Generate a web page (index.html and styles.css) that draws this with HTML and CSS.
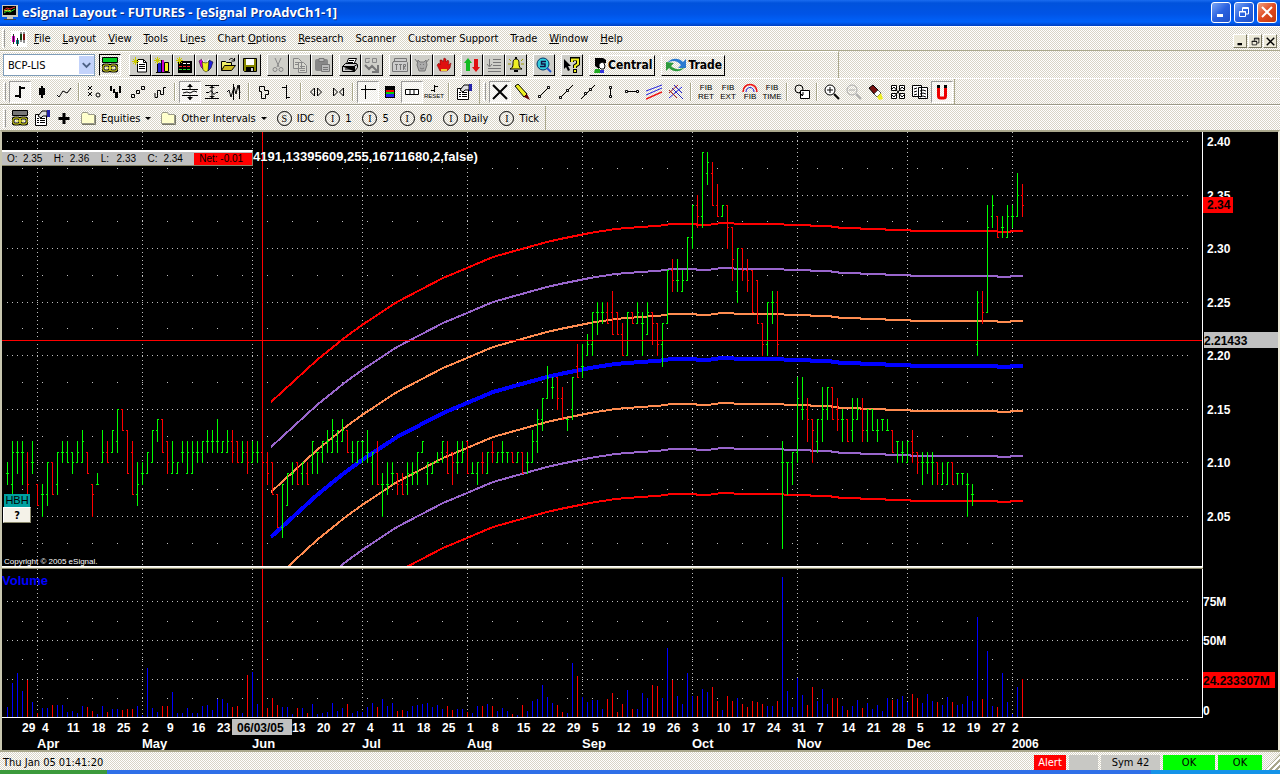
FILE: index.html
```html
<!DOCTYPE html>
<html lang="en">
<head>
    <meta charset="UTF-8">
    <meta name="viewport" content="width=device-width, initial-scale=1.0">
    <title>eSignal Layout - FUTURES - [eSignal ProAdvCh1-1]</title>
    <link rel="stylesheet" href="styles.css">
</head>
<body>
    <!-- icon sprite -->
    <svg class="sprite" aria-hidden="true">
        <symbol id="monitor" viewBox="0 0 16 16"><path fill="#c8c8c0" d="M0 1h16v12H0zM5 13h6v2H5z"/><path fill="#000" d="M1 2h13v9H1z"/><path fill="none" stroke="#e22" d="M2 6l3-2 3 1 5-2"/><path fill="none" stroke="#3d3" d="M2 9l3-2 3 1 5-3"/><path fill="none" stroke="#ee3" d="M2 7l4-1 3 1"/><path fill="#444" d="M2 15h12v1H2z"/></symbol>
        <symbol id="candles" viewBox="0 0 16 16"><path fill="#fff" d="M0 0h16v16H0z"/><path fill="#d0c" d="M1 5h3v6H1z"/><path fill="#088" d="M5 9h3v4H5z"/><path fill="#060" d="M9 3h2v6H9z"/><path fill="#d00" d="M12 3h2v6h-2z"/><path stroke="#222" d="M2.500 3v10M6.500 7v8M10 1v10M13 1v11"/></symbol>
        <symbol id="link" viewBox="0 0 16 16"><path fill="#0c2" stroke="#000" d="M.5 .5h15v5H.5z"/><g fill="none" stroke="#000"><rect x="1" y="8" width="7" height="6" rx="2" stroke-width="3"/><rect x="8" y="8" width="7" height="6" rx="2" stroke-width="3"/></g><g fill="none" stroke="#ee2"><rect x="1" y="8" width="7" height="6" rx="2"/><rect x="8" y="8" width="7" height="6" rx="2"/><path d="M4 11h8"/></g></symbol>
        <symbol id="link-gray" viewBox="0 0 16 16"><path fill="#777" stroke="#000" d="M.5 .5h15v5H.5z"/><g fill="none" stroke="#000"><rect x="1" y="8" width="7" height="6" rx="2" stroke-width="3"/><rect x="8" y="8" width="7" height="6" rx="2" stroke-width="3"/></g><g fill="none" stroke="#ee2"><rect x="1" y="8" width="7" height="6" rx="2"/><rect x="8" y="8" width="7" height="6" rx="2"/><path d="M4 11h8"/></g></symbol>
        <symbol id="new" viewBox="0 0 16 16"><path fill="#fff" stroke="#000" d="M5.500 2.500h6l3 3v9.500h-9z"/><path fill="none" stroke="#000" d="M11.500 2.500v3h3M7 7.500h6M7 9.500h6M7 11.500h6"/><path stroke="#cc0" d="M3.500 0v8M0 4.500h7M1 2l5 5M6 2L1 7"/></symbol>
        <symbol id="newchart" viewBox="0 0 16 16"><path fill="#22c" d="M3 6h4v9H3z"/><path fill="#c0c" d="M7 3h3v12H7z"/><path fill="#ee2" stroke="#000" d="M10.500 5.500h4v9h-4z"/><path stroke="#000" d="M2 15.500h14M3.500 6v9M7.500 3v12"/><path stroke="#cc0" d="M3.500 0v7M0 3.500h7M1 1l5 5M6 1L1 6"/></symbol>
        <symbol id="newquote" viewBox="0 0 16 16"><path d="M2 4h14v12H2z"/><path stroke="#fff" stroke-dasharray="3 1" d="M7 6.500h8"/><path stroke="#e22" stroke-dasharray="3 1" d="M3 9.500h12"/><path stroke="#2d2" stroke-dasharray="3 1" d="M3 12.500h12"/><path stroke="#cc0" d="M3.500 0v7M0 3.500h7M1 1l5 5M6 1L1 6"/></symbol>
        <symbol id="books" viewBox="0 0 16 16"><path fill="#d0d" stroke="#000" stroke-width=".5" d="M1 4l3-2 2 11-3-3z"/><path fill="#ee2" stroke="#000" stroke-width=".5" d="M4 5l4 1 3-2v9l-3 2-3-2z"/><path fill="#22d" stroke="#000" stroke-width=".5" d="M11 3l4 2-2 6-3 3z"/><path fill="none" stroke="#fff" d="M4 2l2 3M11 2l-2 3"/></symbol>
        <symbol id="open" viewBox="0 0 16 16"><path fill="#ee6" stroke="#000" d="M1.500 13.500v-9h4l1 1h5v3"/><path fill="#cb2" stroke="#000" d="M1.500 13.500l3-5h11l-4 5z"/><path fill="none" stroke="#000" d="M9 3c2-2 3-2 5 0M14.500 1v3h-3"/></symbol>
        <symbol id="save" viewBox="0 0 16 16"><path fill="#880" stroke="#000" d="M1.500 1.500h13v13h-12l-1-1z"/><path fill="#fff" d="M4 2h8v6H4z"/><path d="M4 10h8v5H4z"/><path fill="#ccc" d="M9 11h2v3H9z"/></symbol>
        <symbol id="cut" viewBox="0 0 16 16"><g fill="none" stroke="#888"><path d="M5 1l4 9M11 1L7 10"/><circle cx="5" cy="12.500" r="2"/><circle cx="11" cy="12.500" r="2"/></g></symbol>
        <symbol id="copy" viewBox="0 0 16 16"><g fill="#d8d8d0" stroke="#888"><path d="M1.500 1.500h5l3 3v7h-8zM6.500 5.500h5l3 3v7h-8z"/><path d="M3 5.500h4M3 7.500h3M8 9.500h5M8 11.500h5M8 13.500h5"/></g></symbol>
        <symbol id="paste" viewBox="0 0 16 16"><rect x="1" y="2" width="13" height="12" rx="2" fill="#888"/><path fill="#bbb" stroke="#777" d="M5 1.500h5v3H5zM7.500 7.500h8v7h-8z"/><path stroke="#777" d="M9 10.500h5M9 12.500h5"/></symbol>
        <symbol id="print" viewBox="0 0 16 16"><path fill="#fff" stroke="#000" d="M4.500 7l2-5.500h8L12 7"/><path fill="#ccc" stroke="#000" d="M.5 9.500l3-3h11l1 1v3l-3 4H.5z"/><path stroke="#000" d="M.5 9.500h12v5M3 12h7M7 3.500h5M6 5.500h5M12 9.500l3-2"/></symbol>
        <symbol id="go" viewBox="0 0 16 16"><path fill="none" stroke="#888" d="M6 1.500H1.500v4H5v-2M8.500 1.500h4v4h-4z"/><path fill="none" stroke="#777" stroke-width="2" d="M1 8l4 4 3-3 5 5M14 8v7H8"/></symbol>
        <symbol id="itr" viewBox="0 0 16 16"><path fill="#ccc" stroke="#777" d="M2.500 1.500h12v3l1 1v9H.5v-9l2-1z"/><path fill="none" stroke="#777" d="M1 4.500h14M3 7.500h3M4.500 7v6M7 7.500h3M8.500 7v6M11.500 13V7.500h2v2h-2l2 3"/></symbol>
        <symbol id="owl" viewBox="0 0 16 16"><path fill="#aaa" stroke="#777" d="M4 3l2 2h4l2-2 1 5-2 6H5L3 8z"/><path fill="none" stroke="#777" d="M1 2l3 4M15 2l-3 4M6 7.500h1M9 7.500h1M6 11l2 1 2-1"/></symbol>
        <symbol id="hand" viewBox="0 0 16 16"><path fill="#e01010" stroke="#700" stroke-width=".5" d="M4 14L1 8l2-2 1 2V3h2l1 2 1-4 2 1v3l2-2 1 2-1 3 3-2-1 5-3 3z"/><path fill="#ec3" d="M5 12h6v2H5z"/></symbol>
        <symbol id="updown" viewBox="0 0 16 16"><path fill="#1b2" d="M0 6l4-5 4 5H6v8H2V6z"/><path fill="#e01010" d="M8 10h2V2h4v8h2l-4 5z"/></symbol>
        <symbol id="listdown" viewBox="0 0 16 16"><path fill="none" stroke="#777" d="M3.500 2v7M1 7l2.500 3L6 7M7 2.500h8M7 5.500h8M7 8.500h8M2 11.500h13M2 14.500h13"/></symbol>
        <symbol id="bell" viewBox="0 0 16 16"><path fill="#ee2" stroke="#000" d="M8 2c3 0 3 3 3 5 0 3 1 4 3 5H2c2-1 3-2 3-5 0-2 0-5 3-5z"/><path d="M7 0h2v2H7zM6 13h4v2H6z"/><path stroke="#990" d="M1 2l2 2M0 7h3M15 2l-2 2M13 7h3"/></symbol>
        <symbol id="lens" viewBox="0 0 16 16"><circle cx="7" cy="7" r="6" fill="#3cd" stroke="#036"/><path fill="none" stroke="#114" stroke-width="1.500" d="M10 4.500H5.500V7H9v2.500H4"/><path stroke="#25c" stroke-width="2" d="M11 11l4 4"/></symbol>
        <symbol id="help" viewBox="0 0 16 16"><path d="M0 2l7 7H4l2 4-2 1-2-4-2 2z"/><path fill="none" stroke="#000" stroke-width="4" d="M8 5V2h6v5l-3 2v2M11 12v4"/><path fill="none" stroke="#ee2" stroke-width="2" d="M8 5V2.500h6V7l-3 2v2M11 13v2"/></symbol>
        <symbol id="person" viewBox="0 0 16 16"><path d="M3 1h8l3 2v3h-2l-2-1-3 4v3L3 9z"/><path fill="#fff" stroke="#000" d="M7 7l3-2 2 1 1 3-1 3H9l-2-2z"/><path fill="#2a2" d="M3 12h5v4H2z"/><path fill="#33d" d="M8 13h4v3H8z"/></symbol>
        <symbol id="swirl" viewBox="0 0 24 16"><path fill="#2a7ad0" d="M3 6C7 1 14 0 19 5l3-3v9h-8l3-3C13 3 8 3 3 6z"/><path fill="#2c9a3c" d="M21 10c-4 5-11 6-16 1l-3 3V5l8 1-3 3c4 4 9 4 14 1z"/></symbol>

        <symbol id="ohlc" viewBox="0 0 16 16"><path fill="none" stroke="#000" stroke-width="2" d="M8 2v12M8 4h5M3 12h5"/></symbol>
        <symbol id="candle" viewBox="0 0 16 16"><path d="M5 4h6v7H5zM7 2h2v12H7z"/></symbol>
        <symbol id="line" viewBox="0 0 16 16"><path fill="none" stroke="#000" d="M1 11l2 2 4-6 4 2 4-5"/></symbol>
        <symbol id="pnf" viewBox="0 0 16 16"><path fill="none" stroke="#000" d="M2 2l4 4M6 2L2 6M2 8l4 4M6 8l-4 4"/><circle cx="12" cy="11" r="2" fill="none" stroke="#000"/></symbol>
        <symbol id="bars" viewBox="0 0 16 16"><path d="M2 2h2v5H2zM5 5h2v4H5zM7 8h3v6H7zM11 2h2v7h-2z"/></symbol>
        <symbol id="renko" viewBox="0 0 16 16"><path fill="none" stroke="#000" d="M1.500 10.500h3v3h-3zM6.500 6.500h3v3h-3zM11.500 2.500h3v3h-3z"/></symbol>
        <symbol id="kagi" viewBox="0 0 16 16"><path fill="none" stroke="#000" d="M3 9v4.500h2.500v-7h3v4h3V3.500H14"/></symbol>
        <symbol id="fit1" viewBox="0 0 16 16"><path stroke="#000" fill="none" d="M0 5.500h16M0 11.500h16M1 9l4-1 3 1 4-2 3 1M8 0v5M8 16v-5"/><path d="M5 3h6L8 0zM5 13h6l-3 3z"/></symbol>
        <symbol id="fit2" viewBox="0 0 16 16"><path stroke="#000" fill="none" d="M1 1.500h14M1 14.500h14M8 2v12M2 8.500h3l2-2 3 4 2-2h2"/><path d="M5 4h6L8 2zM5 12h6l-3 2z"/></symbol>
        <symbol id="fit3" viewBox="0 0 16 16"><path stroke="#000" fill="none" d="M1 8l2-2 2 7 3-10 2 7 2-9 2 8M7.500 0v16M13.500 1v14"/></symbol>
        <symbol id="blocks" viewBox="0 0 16 16"><path stroke="#000" fill="none" d="M3.500 2.500h5v4h4v4h-3v4h-4v-7h-2z"/></symbol>
        <symbol id="tick" viewBox="0 0 16 16"><path stroke="#000" fill="none" d="M8.500 1v14M4 3.500h4M9 13.500h3"/></symbol>
        <symbol id="expand" viewBox="0 0 16 16"><path stroke="#000" fill="none" d="M6.500 4v8l-4-4zM9.500 4v8l4-4z"/></symbol>
        <symbol id="shrink" viewBox="0 0 16 16"><path stroke="#000" fill="none" d="M3.500 4v8l4-4zM13.500 4v8l-4-4z"/></symbol>
        <symbol id="cross" viewBox="0 0 16 16"><path stroke="#000" fill="none" d="M5.500 1v14M1 5.500h15"/></symbol>
        <symbol id="colors" viewBox="0 0 16 16"><path d="M3 2h10v12H3z"/><path fill="#e00" d="M4 6h8v2H4z"/><path fill="#0c0" d="M4 8h8v2H4z"/><path fill="#22e" d="M4 10h8v3H4z"/></symbol>
        <symbol id="panel" viewBox="0 0 16 16"><path stroke="#000" fill="#fff" d="M1.500 5.500h13v5h-13zM6 6v4M10 6v4"/></symbol>
        <symbol id="reset" viewBox="0 0 16 8"><path stroke="#000" fill="none" d="M8.500 0v7M9 1.500h3M5 5.500h3"/></symbol>
        <symbol id="props" viewBox="0 0 16 16"><path fill="#fff" stroke="#000" d="M1.500 4.500h11v11h-11z"/><path stroke="#000" d="M3 8.500h2M6 8.500h5M3 10.500h2M6 10.500h5M3 12.500h2M6 12.500h5"/><path fill="#ddd" stroke="#000" d="M4 6l4-5h5v5H9L7 8z"/><path fill="#22a" d="M13 0h3v7h-3z"/></symbol>
        <symbol id="bigx" viewBox="0 0 16 16"><path stroke="#000" stroke-width="2" d="M1 1l14 14M15 1L1 15"/></symbol>
        <symbol id="pencil" viewBox="0 0 16 16"><path fill="#ee2" stroke="#000" d="M1 2l3-2 9 10-3 3z"/><path fill="#600" d="M10 13l3-3 3 6z"/></symbol>
        <symbol id="seg" viewBox="0 0 16 16"><path stroke="#000" d="M4 12l8-8"/><path fill="#fff" stroke="#000" d="M2.500 11.500h2v2h-2zM11.500 2.500h2v2h-2z"/></symbol>
        <symbol id="ray" viewBox="0 0 16 16"><path stroke="#000" d="M2 14L15 1"/><path fill="#fff" stroke="#000" d="M1.500 12.500h2v2h-2zM8.500 5.500h2v2h-2z"/></symbol>
        <symbol id="xline" viewBox="0 0 16 16"><path stroke="#000" d="M1 15L15 1"/><path fill="#fff" stroke="#000" d="M4.500 8.500h2v2h-2zM9.500 4.500h2v2h-2z"/></symbol>
        <symbol id="vline" viewBox="0 0 16 16"><path stroke="#000" d="M8.500 3v10"/><path fill="#fff" stroke="#000" d="M7.500 2.500h2v2h-2zM7.500 11.500h2v2h-2z"/></symbol>
        <symbol id="hline" viewBox="0 0 16 16"><path stroke="#000" d="M2 7.500h12"/><path fill="#fff" stroke="#000" d="M1.500 6.500h2v2h-2zM12.500 6.500h2v2h-2z"/></symbol>
        <symbol id="regress" viewBox="0 0 16 16"><path stroke="#22d" d="M0 7l16-6"/><path stroke="#22d" d="M0 11l16-7"/><path stroke="#e11" stroke-width="1.500" d="M0 15l16-7"/></symbol>
        <symbol id="fork" viewBox="0 0 16 16"><path stroke="#22d" d="M6 1l8 8M1 14L14 3"/><path stroke="#a22" d="M1 6l8 8M10 1L1 9"/><path stroke="#22a" d="M4 4l11 11"/></symbol>
        <symbol id="circles" viewBox="0 0 16 16"><circle cx="5" cy="5" r="4" fill="none" stroke="#000"/><path fill="#fff" stroke="#000" d="M6.500 6.500h9v8h-9z"/><path fill="none" stroke="#000" d="M5 8l4 4M6 11h3V8"/></symbol>
        <symbol id="zoomin" viewBox="0 0 16 16"><circle cx="6" cy="6" r="5" fill="#fff" stroke="#000"/><path stroke="#000" d="M3 6h6M6 3v6"/><path stroke="#000" stroke-width="2" d="M10 10l5 5"/></symbol>
        <symbol id="zoomout" viewBox="0 0 16 16"><circle cx="6" cy="6" r="5" fill="none" stroke="#aaa"/><path stroke="#aaa" d="M3 6h6"/><path stroke="#aaa" stroke-width="2" d="M10 10l5 5"/></symbol>
        <symbol id="eraser" viewBox="0 0 16 16"><path fill="#711" stroke="#000" d="M1 4l4-3 5 5-4 4z"/><path fill="#fff" stroke="#555" d="M6 10l4-4 3 3-4 4z"/><path fill="#ee2" d="M9 13l4-4 2 6-4 1z"/></symbol>
        <symbol id="arrange" viewBox="0 0 16 16"><path fill="#fff" stroke="#000" d="M1.500 1.500h5v5h-5zM9.500 1.500h5v5h-5zM1.500 9.500h5v5h-5zM9.500 9.500h5v5h-5z"/><path fill="none" stroke="#000" d="M2 5l2-2 4 5M14 5l-2-2-4 5M2 11l2 2 4-5M14 11l-2 2-4-5"/></symbol>
        <symbol id="pages" viewBox="0 0 16 16"><path fill="#fff" stroke="#000" d="M.5 1.500h9v11h-9zM6.500 3.500h9v11h-9z"/><path fill="none" stroke="#000" d="M2 5l3-1M2 8l3-1M2 11l3-1M8 7l3-1 3 1M8 10l3-1 3 1M8 13l3-1 3 1"/></symbol>
        <symbol id="magnet" viewBox="0 0 16 16"><path fill="none" stroke="#e00" stroke-width="3" d="M4.500 4v8q0 2 2 2h3q2 0 2-2V4"/><path d="M3 1h3v3H3zM10 1h3v3h-3z"/></symbol>
        <symbol id="plus" viewBox="0 0 16 16"><path d="M6.500 3h3v4h4v3h-4v4h-3v-4h-4V7h4z"/></symbol>
        <symbol id="folder" viewBox="0 0 16 16"><path fill="#ffc" stroke="#998" d="M1.500 4.500l1-2h5l1 2h6v9h-13z"/><path fill="none" stroke="#776" d="M15.500 5v9.500H2"/></symbol>
        <symbol id="min" viewBox="0 0 12 12"><path fill="currentColor" d="M2 8h6v3H2z"/></symbol>
        <symbol id="restore" viewBox="0 0 12 12"><path fill="none" stroke="currentColor" d="M1.500 5.500h6v5h-6zM1 6h7M4.500 5V1.500h6V8H8M4 2.500h7"/></symbol>
        <symbol id="close" viewBox="0 0 12 12"><path stroke="currentColor" stroke-width="2" d="M1 1l10 10M11 1L1 11"/></symbol>
    </svg>

    <header class="titlebar">
        <svg class="icon"><use href="#monitor"/></svg>
        <h1>eSignal Layout - FUTURES - [eSignal ProAdvCh1-1]</h1>
        <button class="win-btn" aria-label="Minimize"><svg><use href="#min"/></svg></button>
        <button class="win-btn" aria-label="Restore"><svg><use href="#restore"/></svg></button>
        <button class="win-btn win-close" aria-label="Close"><svg><use href="#close"/></svg></button>
    </header>

    <nav class="menubar">
        <span class="grip"></span>
        <svg class="icon"><use href="#candles"/></svg>
        <button><u>F</u>ile</button>
        <button><u>L</u>ayout</button>
        <button><u>V</u>iew</button>
        <button><u>T</u>ools</button>
        <button>Li<u>n</u>es</button>
        <button>Chart <u>O</u>ptions</button>
        <button><u>R</u>esearch</button>
        <button>Scanner</button>
        <button>Customer Support</button>
        <button>Trade</button>
        <button><u>W</u>indow</button>
        <button><u>H</u>elp</button>
        <div class="mdi">
            <button aria-label="Minimize chart"><svg><use href="#min"/></svg></button>
            <button aria-label="Restore chart"><svg><use href="#restore"/></svg></button>
            <button aria-label="Close chart"><svg><use href="#close"/></svg></button>
        </div>
    </nav>

    <div class="toolbar main-tools">
        <div class="combo">
            <select aria-label="Symbol"><option>BCP-LIS</option></select>
            <svg viewBox="0 0 16 18"><path fill="none" stroke="#4d6185" stroke-width="2" d="M4 7l4 4 4-4"/></svg>
        </div>
        <button class="tool sunken" aria-label="Link"><svg><use href="#link"/></svg></button>
        <div class="group">
            <button class="raised" aria-label="New"><svg><use href="#new"/></svg></button>
            <button class="raised" aria-label="New chart"><svg><use href="#newchart"/></svg></button>
            <button class="raised" aria-label="New quote"><svg><use href="#newquote"/></svg></button>
            <button class="raised" aria-label="Layouts"><svg><use href="#books"/></svg></button>
            <button class="raised" aria-label="Open"><svg><use href="#open"/></svg></button>
            <button class="raised" aria-label="Save"><svg><use href="#save"/></svg></button>
        </div>
        <div class="group">
            <button class="raised" aria-label="Cut"><svg><use href="#cut"/></svg></button>
            <button class="raised" aria-label="Copy"><svg><use href="#copy"/></svg></button>
            <button class="raised" aria-label="Paste"><svg><use href="#paste"/></svg></button>
        </div>
        <div class="group">
            <button class="raised" aria-label="Print"><svg><use href="#print"/></svg></button>
            <button class="raised" aria-label="Go"><svg><use href="#go"/></svg></button>
        </div>
        <div class="group">
            <button class="raised" aria-label="Interval"><svg><use href="#itr"/></svg></button>
            <button class="raised" aria-label="Watch"><svg><use href="#owl"/></svg></button>
            <button class="raised" aria-label="Hot list"><svg><use href="#hand"/></svg></button>
        </div>
        <div class="group">
            <button class="raised" aria-label="Up and down"><svg><use href="#updown"/></svg></button>
            <button class="raised" aria-label="Insert"><svg><use href="#listdown"/></svg></button>
            <button class="raised" aria-label="Alert"><svg><use href="#bell"/></svg></button>
        </div>
        <div class="group"><button class="raised" aria-label="Symbol search"><svg><use href="#lens"/></svg></button></div>
        <div class="group"><button class="raised" aria-label="Help"><svg><use href="#help"/></svg></button></div>
        <button class="wide"><svg><use href="#person"/></svg>Central</button>
        <button class="wide"><svg class="swirl"><use href="#swirl"/></svg>Trade</button>
    </div>

    <div class="toolbar-row">
        <div class="toolbar chart-tools">
            <span class="grip"></span>
            <button class="tool pressed" aria-label="Bar"><svg><use href="#ohlc"/></svg></button>
            <button class="tool" aria-label="Candlestick"><svg><use href="#candle"/></svg></button>
            <button class="tool" aria-label="Line"><svg><use href="#line"/></svg></button>
            <span class="sep"></span>
            <button class="tool" aria-label="Point and figure"><svg><use href="#pnf"/></svg></button>
            <button class="tool" aria-label="Three line break"><svg><use href="#bars"/></svg></button>
            <button class="tool" aria-label="Renko"><svg><use href="#renko"/></svg></button>
            <button class="tool" aria-label="Kagi"><svg><use href="#kagi"/></svg></button>
            <span class="sep"></span>
            <button class="tool pressed" aria-label="Auto scale"><svg><use href="#fit1"/></svg></button>
            <button class="tool" aria-label="Full scale"><svg><use href="#fit2"/></svg></button>
            <button class="tool" aria-label="Study scale"><svg><use href="#fit3"/></svg></button>
            <span class="sep"></span>
            <button class="tool" aria-label="Blocks"><svg><use href="#blocks"/></svg></button>
            <button class="tool" aria-label="Tick"><svg><use href="#tick"/></svg></button>
            <span class="sep"></span>
            <button class="tool" aria-label="Expand"><svg><use href="#expand"/></svg></button>
            <button class="tool" aria-label="Shrink"><svg><use href="#shrink"/></svg></button>
            <span class="sep"></span>
            <button class="tool pressed" aria-label="Crosshair"><svg><use href="#cross"/></svg></button>
            <button class="tool" aria-label="Colors"><svg><use href="#colors"/></svg></button>
            <button class="tool pressed" aria-label="Cursor window"><svg><use href="#panel"/></svg></button>
            <button class="tool reset"><svg><use href="#reset"/></svg>RESET</button>
            <span class="sep"></span>
            <button class="tool" aria-label="Properties"><svg><use href="#props"/></svg></button>
        </div>
        <div class="toolbar">
            <span class="grip"></span>
            <button class="tool pressed" aria-label="No tool"><svg><use href="#bigx"/></svg></button>
            <button class="tool" aria-label="Draw"><svg><use href="#pencil"/></svg></button>
            <button class="tool" aria-label="Segment"><svg><use href="#seg"/></svg></button>
            <button class="tool" aria-label="Ray"><svg><use href="#ray"/></svg></button>
            <button class="tool" aria-label="Extended line"><svg><use href="#xline"/></svg></button>
            <button class="tool" aria-label="Vertical line"><svg><use href="#vline"/></svg></button>
            <button class="tool" aria-label="Horizontal line"><svg><use href="#hline"/></svg></button>
            <button class="tool" aria-label="Regression"><svg><use href="#regress"/></svg></button>
            <button class="tool" aria-label="Pitchfork"><svg><use href="#fork"/></svg></button>
            <span class="sep"></span>
            <button class="tool fib">FIB<br>RET</button>
            <button class="tool fib">FIB<br>EXT</button>
            <button class="tool fib arc"><svg viewBox="0 0 16 9"><path fill="none" stroke="#e11" stroke-width="1.500" d="M1 9c0-10 14-10 14 0"/><path fill="none" stroke="#22d" d="M4 9c0-6 8-6 8 0"/></svg>FIB</button>
            <button class="tool fib">FIB<br>TIME</button>
            <span class="sep"></span>
            <button class="tool" aria-label="Shapes"><svg><use href="#circles"/></svg></button>
            <span class="sep"></span>
            <button class="tool" aria-label="Zoom in"><svg><use href="#zoomin"/></svg></button>
            <button class="tool" aria-label="Zoom out"><svg><use href="#zoomout"/></svg></button>
            <button class="tool" aria-label="Erase"><svg><use href="#eraser"/></svg></button>
            <button class="tool" aria-label="Arrange"><svg><use href="#arrange"/></svg></button>
            <button class="tool" aria-label="Pages"><svg><use href="#pages"/></svg></button>
            <button class="tool pressed" aria-label="Magnet"><svg><use href="#magnet"/></svg></button>
        </div>
    </div>

    <div class="toolbar-row">
        <div class="toolbar intervals">
            <span class="grip"></span>
            <button class="tool" aria-label="Link group"><svg><use href="#link-gray"/></svg></button>
            <button class="tool" aria-label="Edit studies"><svg><use href="#props"/></svg></button>
            <button class="tool" aria-label="Add"><svg><use href="#plus"/></svg></button>
            <button class="folder"><svg><use href="#folder"/></svg>Equities<i class="caret"></i></button>
            <button class="folder"><svg><use href="#folder"/></svg>Other Intervals<i class="caret"></i></button>
            <button class="interval"><b>S</b>IDC</button>
            <button class="interval"><b>I</b>1</button>
            <button class="interval"><b>I</b>5</button>
            <button class="interval"><b>I</b>60</button>
            <button class="interval"><b>I</b>Daily</button>
            <button class="interval"><b>I</b>Tick</button>
        </div>
    </div>

    <main class="chart">
        <div class="pane">
            <svg id="price" class="plot price"></svg>
            <svg id="price-axis" class="axis"></svg>
            <div class="cursor-window">
                <span>O:</span><span>2.35</span>
                <span>H:</span><span>2.36</span>
                <span>L:</span><span>2.33</span>
                <span>C:</span><span>2.34</span>
                <span class="net">Net: -0.01</span>
            </div>
            <div class="legend">
                <span class="hbh">HBH</span>
                <button>?</button>
            </div>
        </div>
        <div class="splitter"></div>
        <div class="pane">
            <svg id="volume" class="plot volume"></svg>
            <svg id="volume-axis" class="axis"></svg>
        </div>
        <svg id="dates" class="dates"></svg>
    </main>

    <footer class="statusbar">
        <span class="clock">Thu Jan 05 01:41:20</span>
        <span class="cell alert">Alert</span>
        <span class="cell blank"></span>
        <span class="cell symbols">Sym 42</span>
        <span class="cell ok">OK</span>
        <span class="cell ok last">OK</span>
        <span class="resize"></span>
    </footer>
    <div class="taskbar"><span class="start"></span><span class="tray"></span></div>

    <script src="chart.js"></script>
</body>
</html>
```
FILE: styles.css
```css
* {
    box-sizing: border-box;
}
body {
    margin: 0;
    min-height: 100vh;
    display: flex;
    flex-direction: column;
    font-family: "DejaVu Sans Condensed", "DejaVu Sans", Tahoma, sans-serif;
    font-size: 11px;
    color: #000;
    background: repeating-conic-gradient(#ffffff 0 25%, #d8d4c6 0 50%) 0 0 / 2px 2px;
}
button {
    font: inherit;
    color: inherit;
    background: none;
    border: none;
    padding: 0;
    white-space: nowrap;
}
svg {
    display: block;
    flex: none;
}
.sprite {
    position: absolute;
    width: 0;
    height: 0;
}
.icon {
    width: 16px;
    height: 16px;
}

/* title bar */
.titlebar {
    height: 26px;
    display: flex;
    align-items: center;
    gap: 3px;
    padding: 0 3px 2px 2px;
    background: linear-gradient(#1a6cf0 0, #0052dc 3px, #0054e6 14px, #0062fa 22px, #0040c0 26px);
}
.titlebar h1 {
    flex: 1;
    margin: 0 0 0 1px;
    font: bold 13px/20px "Open Sans", "Noto Sans", sans-serif;
    color: #fff;
    text-shadow: 1px 1px #0a2a80;
}
.win-btn {
    width: 20px;
    height: 21px;
    display: grid;
    place-items: center;
    color: #fff;
    border: 1px solid #fff;
    border-radius: 3px;
    background: linear-gradient(135deg, #7ba6f5, #2a62e0 50%, #1f50c8);
}
.win-btn svg {
    width: 12px;
    height: 12px;
}
.win-close {
    background: linear-gradient(135deg, #f0a080, #e04a20 50%, #c03a10);
}

/* menu */
.menubar {
    height: 25px;
    display: flex;
    align-items: center;
    padding: 0 3px 0 2px;
    border-top: 1px solid #fff;
    border-bottom: 1px solid #aaa88c;
}
.menubar > button {
    padding: 0 6px;
}
.menubar .icon {
    margin: 0 1px 0 3px;
}
.mdi {
    display: flex;
    gap: 1px;
    margin-left: auto;
    padding-top: 5px;
}
.mdi button {
    width: 14px;
    height: 14px;
    display: grid;
    place-items: center;
    background: #ece9d8;
    border: 1px solid #fff;
    border-right-color: #77755f;
    border-bottom-color: #77755f;
}
.mdi svg {
    width: 9px;
    height: 9px;
}

/* toolbars */
.grip {
    width: 3px;
    height: 19px;
    border: 1px solid #fff;
    border-right-color: #999;
    margin-right: 3px;
}
.toolbar-row {
    display: flex;
    height: 27px;
    border-top: 1px solid #fff;
    border-bottom: 1px solid #9c9a88;
}
.toolbar {
    display: flex;
    align-items: center;
    padding: 0 1px 0 3px;
    border-right: 1px solid #aaa88c;
}
.chart-tools {
    padding-right: 4px;
}
.main-tools {
    height: 27px;
    width: 839px;
    max-width: 100%;
    gap: 6px;
    border-top: 1px solid #fff;
}
.group {
    display: flex;
}
.combo {
    position: relative;
    width: 92px;
    margin-right: -2px;
}
.combo select {
    appearance: none;
    width: 100%;
    height: 22px;
    padding: 0 4px;
    font: inherit;
    color: #000;
    background: #fff;
    border: 1px solid #7f9db9;
    border-radius: 0;
}
.combo svg {
    position: absolute;
    right: 1px;
    top: 2px;
    width: 15px;
    height: 18px;
    background: #c3d3fb;
    pointer-events: none;
}
.tool {
    width: 22px;
    height: 22px;
    display: grid;
    place-items: center;
    border: 1px solid transparent;
}
.tool svg,
.raised svg,
.wide svg {
    width: 16px;
    height: 16px;
}
.pressed {
    border-color: #999 #fff #fff #999;
    background: rgba(255, 255, 255, 0.5);
}
.sunken {
    border-color: #000 #fff #fff #000;
    margin-right: 2px;
}
.raised {
    width: 22px;
    height: 22px;
    display: grid;
    place-items: center;
    background: #cfcfc9;
    border: 1px solid #fff;
    border-right-color: #000;
    border-bottom-color: #000;
}
.wide {
    height: 21px;
    display: flex;
    align-items: center;
    padding: 0 2px;
    font-size: 12px;
    font-weight: bold;
    border: 1px solid #fff;
    border-right-color: #000;
    border-bottom-color: #000;
}
.wide .swirl {
    width: 24px;
}
.sep {
    width: 2px;
    height: 18px;
    margin: 0 3px;
    border-left: 1px solid #aaa88c;
    border-right: 1px solid #fff;
}
.fib {
    align-content: center;
    font: 8px/9px "Liberation Sans", Arial, sans-serif;
}
.tool.arc svg {
    height: 9px;
}
.reset {
    align-content: center;
    font: 6px/6px "Liberation Sans", Arial, sans-serif;
}
.tool.reset svg {
    height: 8px;
}
.toolbar-row + .toolbar-row {
    height: 25px;
    border-bottom: none;
}
.folder,
.interval {
    display: flex;
    align-items: center;
    gap: 5px;
}
.folder {
    padding: 0 4px 0 5px;
}
.folder svg {
    width: 16px;
    height: 16px;
}
.caret {
    border: 3px solid transparent;
    border-top-color: #000;
    border-bottom: none;
}
.interval {
    padding: 0 5px 0 6px;
}
.interval b {
    width: 15px;
    height: 15px;
    border: 1px solid #000;
    border-radius: 50%;
    font: 10px/13px "Liberation Serif", serif;
    text-align: center;
}

/* chart */
.chart {
    flex: 1;
    border: 2px solid #aaa88c;
    border-left-color: #c9c7b0;
    border-right-color: #ece9d8;
    border-bottom: none;
    background: #000;
}
.pane {
    position: relative;
    display: flex;
}
.plot {
    flex: 1;
    min-width: 0;
    border-right: 1px solid #fff;
}
.price,
.price + .axis {
    height: 434px;
}
.volume,
.volume + .axis {
    height: 149px;
}
.axis {
    width: 75px;
}
.splitter {
    height: 3px;
    margin-right: 75px;
    background: #ece9d8;
    border-top: 1px solid #fff;
    border-bottom: 1px solid #8a886c;
}
.dates {
    width: 100%;
    height: 32px;
}
.chart text {
    font: bold 12px "Liberation Sans", Arial, sans-serif;
    fill: #fff;
}
.chart .title,
.chart .month {
    font-size: 13px;
}
.chart .volume-title {
    fill: #00f;
}
.chart .copyright {
    font-weight: normal;
    font-size: 8px;
}
.chart .dark {
    fill: #000;
}
.grid {
    stroke: #c0c0c0;
    fill: none;
}
.up {
    stroke: #0f0;
    fill: none;
}
.down {
    stroke: #f00;
    fill: none;
}
.vol-up {
    stroke: #00f;
}
.cursor-window {
    position: absolute;
    left: 0;
    top: 18px;
    width: 251px;
    height: 16px;
    display: flex;
    align-items: center;
    padding-left: 5px;
    font: 10px/12px "Liberation Sans", Arial, sans-serif;
    background: #c0c0c0;
    border-top: 2px solid #fff;
    border-right: 1px solid #8a886c;
    border-bottom: 1px solid #8a886c;
}
.cursor-window span:nth-child(odd) {
    width: 16px;
}
.cursor-window span:nth-child(even) {
    width: 31px;
}
.cursor-window span.net {
    width: 58px;
    padding-left: 5px;
    margin-left: auto;
    background: #f00;
}
.legend {
    position: absolute;
    left: 1px;
    top: 362px;
    width: 28px;
    text-align: center;
}
.hbh {
    display: block;
    margin: 0 1px;
    font: 11px/13px "Liberation Sans", Arial, sans-serif;
    background: #00a0a0;
}
.legend button {
    display: block;
    width: 28px;
    height: 16px;
    font-weight: bold;
    background: #f4f2e8;
    border: 1px solid #fff;
    border-right-color: #8a886c;
    border-bottom-color: #8a886c;
}

/* status bar */
.statusbar {
    height: 20px;
    display: flex;
    align-items: center;
    gap: 3px;
    padding: 2px 0 0 3px;
    border-top: 2px solid #aaa88c;
}
.clock {
    flex: 1;
}
.cell {
    height: 15px;
    line-height: 15px;
    text-align: center;
    background: #c8c8c4;
}
.alert {
    width: 32px;
    color: #fff;
    background: #f00;
}
.blank {
    width: 29px;
}
.symbols {
    width: 59px;
}
.ok {
    width: 52px;
    background: #0f0;
}
.last {
    width: 44px;
}
.resize {
    width: 15px;
    height: 16px;
    background: repeating-linear-gradient(135deg, #fff 0 2px, #aaa88c 2px 4px);
    clip-path: polygon(100% 0, 100% 100%, 0 100%);
}
.taskbar {
    height: 4px;
    display: flex;
    justify-content: space-between;
    background: #2f6fe8;
}
.start {
    width: 107px;
    background: #3c9a3c;
}
.tray {
    width: 129px;
    background: #1593e8;
}
```
FILE: chart.js
```javascript
// direction, open, high, low, close (cents above 2.00), volume bar height
const bars = `
G 9 10 8 9 10|G 8 12 7 11 34|G 11 12 9 11 44|G 11 12 8 11 26|R 10 11 7 8 37|G 10 12 9 10 15|R 8 8 6 6 4|G 7 8 5 7 9
G 7 10 6 10 9|R 10 10 7 7 12|G 8 11 7 11 12|G 11 12 10 11 12|G 11 12 10 10 5|G 11 11 9 10 6|G 10 12 10 11 4|G 10 13 10 12 11
R 11 11 9 9 10|R 8 8 5 7 6|G 8 9 8 8 3|G 10 13 10 11 11|R 11 12 10 10 5|G 11 13 11 13 8|G 12 15 11 15 8|R 15 15 13 13 7
R 13 13 9 9 8|R 11 12 7 7 8|G 7 10 6 8 11|G 9 10 8 9 2|G 9 11 9 11 49|G 10 13 10 13 9|G 13 14 12 14 5|R 14 14 11 11 11
R 12 12 9 10 11|G 9 12 9 10 25|G 9 10 9 10 4|G 11 12 10 11 4|G 9 12 9 11 9|G 9 12 9 11 4|G 11 12 10 11 4|G 11 12 10 12 11
G 12 13 11 12 12|G 12 13 11 12 7|G 12 14 11 12 18|G 11 12 11 12 18|G 11 13 11 12 14|R 12 13 10 11 10|R 12 12 10 10 11|G 10 12 10 11 4
R 11 12 9 10 42|G 10 12 10 11 45|G 11 12 10 11 13|R 11 12 10 10 6|R 10 11 8 9 9|R 10 10 7 7 19|R 7 7 4 4 12|G 4 8 3 8 10
G 6 9 6 9 10|G 9 10 8 9 3|R 10 10 8 8 9|G 9 10 8 10 9|R 9 10 8 8 4|G 10 12 9 12 13|G 11 11 9 11 3|G 11 12 10 12 4
G 12 13 11 12 5|G 11 14 11 13 14|G 12 13 11 13 6|G 12 14 12 13 9|R 13 13 11 11 13|G 11 12 10 11 4|G 10 12 10 12 6|G 12 12 10 12 5
G 11 13 10 11 10|G 10 11 8 11 14|R 11 12 8 8 10|G 8 9 5 8 18|G 8 10 7 8 11|G 9 10 8 9 14|R 9 9 7 8 6|R 8 9 7 7 7
G 8 10 7 9 6|G 9 10 8 9 11|G 9 11 8 11 12|G 11 12 11 12 13|G 9 10 8 10 14|G 9 10 9 10 10|G 10 11 10 10 12|G 11 12 10 12 8
R 11 12 9 9 11|R 11 11 8 10 7|G 10 12 9 10 8|G 10 12 10 11 8|R 12 12 9 9 5|G 9 10 9 9 4|G 9 10 8 10 11|R 10 11 9 10 11
G 9 11 9 11 13|R 11 12 10 11 11|G 10 11 10 11 6|G 11 12 10 11 9|G 11 11 10 11 6|R 11 11 10 10 3|G 10 11 10 11 2|R 11 11 9 9 12
G 10 11 9 10 6|G 10 13 10 12 16|G 12 15 11 14 18|G 14 16 13 16 32|G 16 19 16 18 20|G 17 18 16 17 14|R 18 18 15 16 12|R 16 17 14 14 5
G 14 14 13 14 4|G 15 18 14 18 54|R 19 21 18 18 41|G 19 21 18 19 20|G 20 22 20 21 15|G 21 24 20 24 17|G 24 25 22 24 17|G 24 25 23 24 8
R 24 25 23 23 18|R 24 26 22 22 24|R 24 24 22 22 5|R 22 23 20 20 13|G 20 24 20 24 27|R 24 24 23 23 8|G 23 25 23 24 8|G 23 24 20 23 24
G 22 25 22 24 19|R 24 24 21 23 32|R 23 23 20 21 31|G 21 23 19 23 19|G 23 28 23 28 69|R 28 29 26 27 37|G 27 29 26 27 21|G 26 28 26 27 13
G 27 31 27 31 44|G 31 34 30 34 21|R 34 35 32 33 21|G 33 39 32 39 28|G 37 39 36 38 25|R 37 38 34 34 30|R 34 36 33 33 16|G 33 34 33 34 7
R 34 34 30 32 21|R 32 32 27 29 16|G 26 30 25 30 19|R 30 30 27 28 13|R 28 29 26 27 10|R 28 28 24 24 16|R 27 27 23 23 15|R 23 23 20 21 13
G 21 25 20 25 11|G 25 26 23 25 11|R 25 26 20 21 16|G 10 12 2 10 140|G 10 10 7 10 26|G 10 11 8 11 10|G 11 18 10 16 39|G 15 18 14 15 22
R 15 16 12 14 12|R 14 14 10 13 30|G 12 14 11 14 16|G 14 17 12 15 28|G 15 17 14 17 13|R 17 17 14 14 19|R 15 16 13 14 19|G 14 15 12 14 11
R 14 14 12 12 7|G 13 16 12 14 11|G 14 16 14 15 17|R 15 16 12 13 9|G 13 15 12 15 14|G 15 15 13 13 8|G 13 14 12 13 12|G 14 14 13 14 6
G 13 14 13 13 19|R 13 13 11 11 17|G 12 12 10 12 18|G 11 12 10 11 21|G 10 12 10 12 15|R 12 13 10 11 23|R 11 11 9 10 19|G 10 11 8 10 14
G 10 11 9 10 23|G 10 11 8 10 16|R 10 10 8 9 15|G 8 10 8 9 12|G 8 10 8 10 20|R 10 10 8 8 15|G 9 9 8 9 12|G 9 9 8 9 13
G 8 9 5 8 21|G 7 8 6 7 16|G 21 26 20 25 100|R 25 26 23 24 18|G 24 34 24 32 66|G 33 35 32 34 11|R 33 33 31 31 10|G 32 33 31 32 44
G 31 34 31 33 15|G 33 34 32 33 3|G 33 37 33 35 30|R 35 36 33 34 38`
    .trim().split(/[|\n]/).map(row => row.split(' '));

// centre of the hurst bands, the other lines run parallel to it
const center = [[269, 405], [315, 363], [341, 342], [360, 328], [395, 305], [441, 281], [465, 271], [491, 260],
    [516, 253], [545, 245], [558, 242], [588, 236], [613, 232], [638, 230], [655, 229], [670, 227], [693, 227],
    [696, 228], [705, 228], [720, 226], [731, 226], [733, 227], [781, 227], [783, 228], [808, 228], [809, 229],
    [829, 229], [830, 230], [836, 230], [837, 231], [858, 231], [859, 232], [883, 232], [884, 233], [908, 233],
    [909, 234], [995, 234], [996, 235], [1008, 235], [1009, 234], [1021, 234]];
const bands = [[-135, '#ff0000', 2], [-90, '#9966cc', 2], [-45, '#ff8c50', 2], [0, '#0000ff', 4],
    [45, '#ff8c50', 2], [90, '#9966cc', 2], [135, '#ff0000', 2]];

const days = [29, 4, 11, 18, 25, 2, 9, 16, 23, '', '', 13, 20, 27, 4, 11, 18, 25, 1, 8, 15, 22, 29, 5, 12, 19, 26,
    3, 10, 17, 24, 31, 7, 14, 21, 28, 5, 12, 19, 27];
const months = { Apr: 35, May: 140, Jun: 250, Jul: 360, Aug: 465, Sep: 580, Oct: 690, Nov: 795, Dec: 905, 2006: 1010 };
const dayX = i => i === 0 ? 20 : 15 + i * 25;
const cursorX = 260;

const priceY = p => Math.round(9 + (40 - p) * 10.71) + 0.5;
const barX = i => 5.5 + i * 5;

function path(cls, d, extra = '') {
    return `<path class="${cls}" shape-rendering="crispEdges" d="${d}" ${extra}/>`;
}

function text(x, y, s, cls = '') {
    return `<text x="${x}" y="${y}" class="${cls}">${s}</text>`;
}

function grid(width, height, major, minor) {
    let out = '';
    for (const y of major) out += path('grid', `M5 ${y}H${width - 10}`, 'stroke-dasharray="1 4"');
    for (const x of Object.values(months)) out += path('grid', `M${x + 0.5} 0V${height}`, 'stroke-dasharray="1 3"');
    let dots = '';
    for (const y of minor) {
        days.forEach((d, i) => dots += `M${dayX(i)} ${y}h1`);
    }
    return out + path('grid', dots);
}

function drawPrice() {
    const svg = document.getElementById('price');
    const width = svg.clientWidth;
    const major = [40, 35, 30, 25, 20, 15, 10, 5];
    let out = grid(width, 434, major.map(priceY), major.map(p => priceY(p - 2.5)));

    for (const [offset, color, size] of bands) {
        const d = 'M' + center.map(([x, y]) => `${x} ${y + offset}`).join('L');
        out += path('', d, `fill="none" stroke="${color}" stroke-width="${size}"`);
    }
    bars.forEach(([dir, o, h, l, c], i) => {
        const x = barX(i);
        out += path(dir === 'G' ? 'up' : 'down',
            `M${x} ${priceY(h) - 0.5}V${priceY(l) + 0.5}M${x - 1.5} ${priceY(o)}h1M${x + 0.5} ${priceY(c)}h1`);
    });
    out += path('down', `M0 208.5H${width}M${cursorX + 0.5} 0V434`);
    out += text(251, 29, '4191,13395609,255,16711680,2,false)', 'title');
    out += text(2, 432, 'Copyright © 2005 eSignal.', 'copyright');
    svg.innerHTML = out;

    out = major.map(p => text(4, priceY(p) + 4, '2.' + String(p).padStart(2, '0'))).join('');
    out += '<rect x="0" y="65" width="30" height="16" fill="#f00"/>' + text(4, 77, '2.34', 'dark');
    out += '<rect x="1" y="200" width="74" height="16" fill="#c0c0c0"/>' + text(1, 213, '2.21433', 'dark');
    document.getElementById('price-axis').innerHTML = out;
}

function drawVolume() {
    const svg = document.getElementById('volume');
    let out = grid(svg.clientWidth, 149, [32.5, 71.5, 110.5], [52.5, 90.5, 129.5]);
    bars.forEach(([dir, , , , , v], i) => {
        out += path(dir === 'G' ? 'vol-up' : 'down', `M${barX(i)} 148v-${v}`);
    });
    out += path('down', `M${cursorX + 0.5} 0V142`);
    out += path('', `M0 148.5H${svg.clientWidth}`, 'stroke="#fff"');
    out += text(0, 16, 'Volume', 'title volume-title');
    svg.innerHTML = out;

    document.getElementById('volume-axis').innerHTML = text(0, 37, '75M') + text(0, 76, '50M') + text(0, 146, '0')
        + '<rect x="0" y="103" width="72" height="16" fill="#f00"/>' + text(0, 116, '24.233307M', 'dark');
}

function drawDates() {
    let out = days.map((d, i) => text(dayX(i), 14, d)).join('') + text(1010, 14, 2);
    for (const [name, x] of Object.entries(months)) {
        out += text(x, 30, name, name === '2006' ? '' : 'month');
    }
    out += '<rect x="230" y="1" width="60" height="16" fill="#c0c0c0"/>' + text(235, 14, '06/03/05', 'dark');
    document.getElementById('dates').innerHTML = out;
}

function draw() {
    drawPrice();
    drawVolume();
    drawDates();
}

draw();
window.addEventListener('resize', draw);
```
